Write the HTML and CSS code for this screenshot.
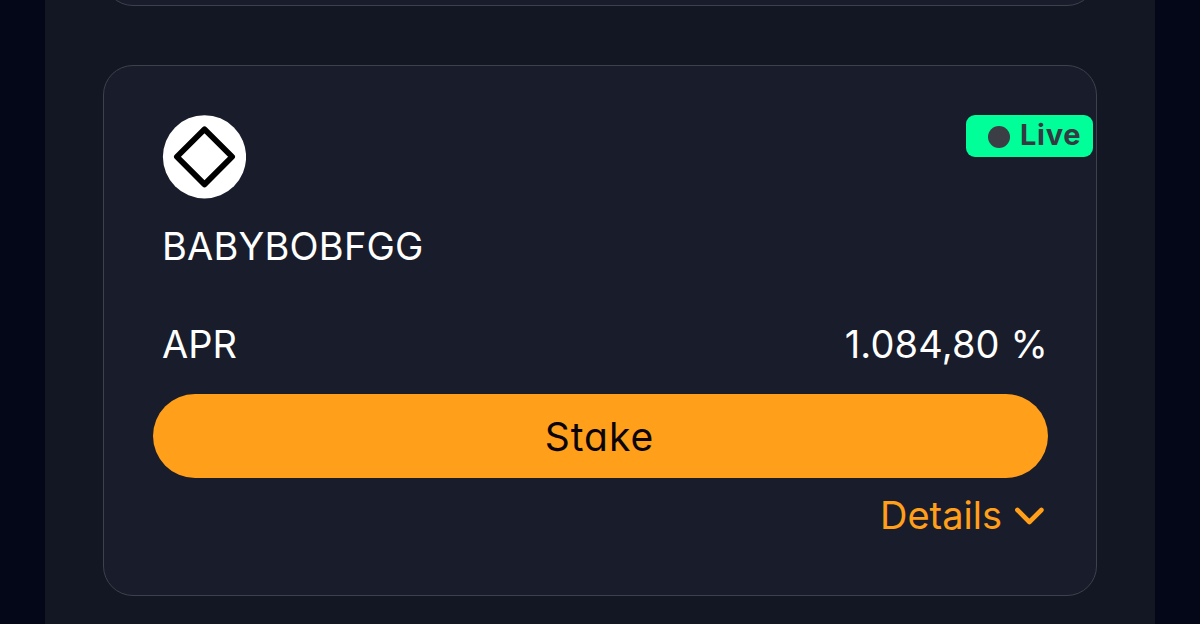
FILE: index.html
```html
<!DOCTYPE html>
<html lang="en">
<head>
  <meta charset="UTF-8" />
  <meta name="viewport" content="width=device-width, initial-scale=1.0"/>
  <title>Stake</title>
  <link rel="stylesheet" href="styles.css">
</head>
<body>
  <main class="panel">
    <div class="card card-prev"></div>
    <div class="card">
      <div class="card-top">
        <div class="token-icon">
          <svg viewBox="0 0 84 84" width="84" height="84">
            <circle cx="42.5" cy="41.8" r="41.6" fill="#fff"/>
            <path d="M42.5 14.3 L70.1 41.8 L42.5 69.4 L14.9 41.8 Z" fill="none" stroke="#000" stroke-width="5.8" stroke-linejoin="round"/>
          </svg>
        </div>
        <div class="badge"><span class="dot"></span><span class="badge-text">Live</span></div>
      </div>
      <div class="token-name"><span>BABYBOBFGG</span></div>
      <div class="row">
        <span class="label">APR</span>
        <span class="value">1.084,80 %</span>
      </div>
      <button class="stake-button">Stake</button>
      <a class="details">
        <span>Details</span>
        <svg viewBox="0 0 32 20" width="32" height="20">
          <path d="M3.4 5 L15.4 17 L27.4 5" fill="none" stroke="#ff9f1a" stroke-width="4.6" stroke-linecap="round" stroke-linejoin="round"/>
        </svg>
      </a>
    </div>
  </main>
</body>
</html>
```

FILE: styles.css
```css
:root {
  --bg: #040717;
  --panel: #131623;
  --card: #191c2a;
  --border: #3e404d;
  --accent: #ff9f1a;
  --live: #00ff99;
}
* { box-sizing: border-box; margin: 0; padding: 0; }
body {
  height: 624px;
  overflow: hidden;
  background-color: var(--bg);
  color: #fff;
  font-family: Inter, sans-serif;
  font-size: 38px;
  line-height: 50px;
}
.panel {
  width: 1110px;
  height: 624px;
  margin: 0 auto;
  padding: 0 58px;
  background-color: var(--panel);
  overflow: hidden;
}
.card {
  height: 531px;
  padding: 49px 48px 0 49px;
  background-color: var(--card);
  border: 1px solid var(--border);
  border-radius: 30px;
}
.card-prev {
  margin-top: -525px;
  margin-bottom: 59px;
}
.card-top {
  display: flex;
  justify-content: space-between;
  align-items: flex-start;
  height: 84px;
  padding-left: 9px;
}
.token-icon svg { display: block; }
.badge {
  display: flex;
  align-items: center;
  width: 127px;
  height: 42px;
  margin-right: -45px;
  padding-left: 22px;
  background-color: var(--live);
  border-radius: 9px;
  color: #343942;
}
.dot {
  width: 22px;
  height: 22px;
  margin-top: 1px;
  margin-right: 10px;
  border-radius: 50%;
  background-color: #3b3e45;
}
.badge-text {
  font-size: 29px;
  font-weight: 700;
  line-height: 40px;
  height: 42px;
  letter-spacing: 0.7px;
}
.token-name {
  margin-top: 22px;
  padding-left: 9px;
  letter-spacing: 0.2px;
}
.row {
  display: flex;
  justify-content: space-between;
  margin-top: 48px;
  padding: 0 0 0 9px;
}
.value { letter-spacing: 0.15px; }
.stake-button {
  display: block;
  width: 100%;
  height: 84px;
  margin-top: 25px;
  padding-right: 2px;
  background-color: var(--accent);
  border: none;
  border-radius: 42px;
  color: #0b0507;
  font-family: inherit;
  font-size: 39px;
  font-feature-settings: "cv11";
  letter-spacing: 1px;
  cursor: pointer;
}
.details {
  display: flex;
  justify-content: flex-end;
  align-items: center;
  gap: 12px;
  margin-top: 12px;
  padding-right: 2px;
  color: var(--accent);
  cursor: pointer;
}
```
